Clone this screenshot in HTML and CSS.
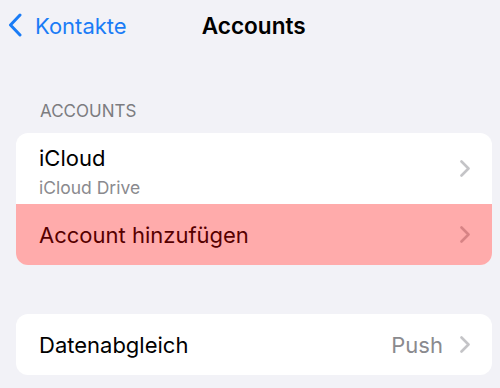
FILE: index.html
```html
<!DOCTYPE html>
<html lang="de">
<head>
<meta charset="utf-8">
<title>Accounts</title>
<link rel="stylesheet" href="styles.css">
</head>
<body>
<header class="nav">
  <a class="back" href="#">
    <svg class="back-icon" width="14" height="24" viewBox="0 0 14 24"><path d="M12 2 L2.5 12 L12 22" fill="none" stroke="#1a7cf6" stroke-width="3" stroke-linecap="round" stroke-linejoin="round"/></svg>
    <span class="back-label">Kontakte</span>
  </a>
  <h1 class="title">Accounts</h1>
</header>

<main class="content">
  <div class="section-header">ACCOUNTS</div>
  <div class="card">
    <div class="row row-tall">
      <div class="row-text">
        <div class="row-title">iCloud</div>
        <div class="row-sub">iCloud Drive</div>
      </div>
      <svg class="chev" width="10" height="17" viewBox="0 0 10 17"><path d="M1.5 1.5 L8.5 8.5 L1.5 15.5" fill="none" stroke="#c4c4c7" stroke-width="2.6" stroke-linecap="round" stroke-linejoin="round"/></svg>
    </div>
    <div class="row row-highlight">
      <div class="row-title">Account hinzufügen</div>
      <svg class="chev" width="10" height="17" viewBox="0 0 10 17"><path d="M1.5 1.5 L8.5 8.5 L1.5 15.5" fill="none" stroke="#c4c4c7" stroke-width="2.6" stroke-linecap="round" stroke-linejoin="round"/></svg>
      <div class="overlay"></div>
    </div>
  </div>

  <div class="card card-second">
    <div class="row">
      <div class="row-title">Datenabgleich</div>
      <div class="row-value">Push</div>
      <svg class="chev" width="10" height="17" viewBox="0 0 10 17"><path d="M1.5 1.5 L8.5 8.5 L1.5 15.5" fill="none" stroke="#c4c4c7" stroke-width="2.6" stroke-linecap="round" stroke-linejoin="round"/></svg>
    </div>
  </div>
</main>
</body>
</html>
```

FILE: styles.css
```css
html, body {
  margin: 0;
  padding: 0;
}
body {
  background: #f2f2f7;
  font-family: Inter, "Noto Sans", "Liberation Sans", sans-serif;
  color: #000;
  width: 500px;
  height: 388px;
  overflow: hidden;
}
.nav {
  display: flex;
  align-items: center;
  height: 48px;
  padding: 2px 0 0 8px;
}
.back {
  display: flex;
  align-items: center;
  text-decoration: none;
  color: #1a7cf6;
}
.back-icon {
  display: block;
  margin-top: -2px;
}
.back-label {
  margin-left: 13px;
  font-size: 22px;
  line-height: 26px;
}
.title {
  margin: 0 0 0 75px;
  font-size: 22.6px;
  font-weight: 600;
  line-height: 26px;
}
.content {
  padding-top: 51px;
}
.section-header {
  padding-left: 40px;
  font-size: 17px;
  line-height: 20px;
  color: #7c7c80;
  margin-bottom: 12px;
}
.card {
  margin: 0 8px 0 16px;
  background: #fff;
  border-radius: 12px;
  overflow: hidden;
}
.card-second {
  margin-top: 49px;
}
.row {
  position: relative;
  display: flex;
  align-items: center;
  height: 61px;
  padding: 0 22px 0 23px;
}
.row-tall {
  height: 71px;
}
.row-text {
  flex: 1;
  align-self: flex-start;
  margin-top: 12px;
}
.row-title {
  flex: 1;
  font-size: 22px;
  line-height: 26px;
}
.row-sub {
  font-size: 17.5px;
  line-height: 22px;
  color: #8a8a8e;
  margin-top: 6px;
}
.row-value {
  font-size: 22px;
  line-height: 26px;
  color: #8a8a8e;
  margin-right: 17px;
}
.chev {
  display: block;
  flex: none;
}
.overlay {
  position: absolute;
  inset: 0;
  background: rgba(255, 0, 0, 0.33);
  pointer-events: none;
}
```
